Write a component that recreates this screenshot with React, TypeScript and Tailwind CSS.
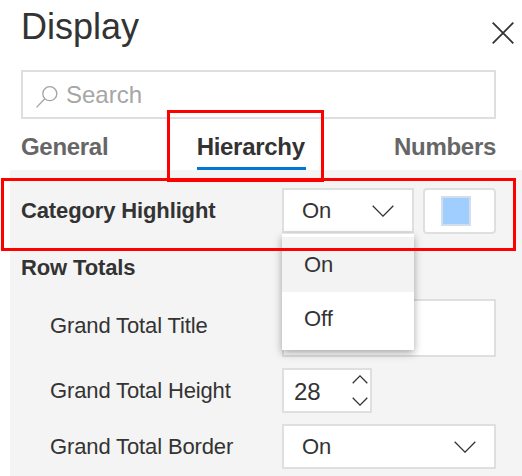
import type { ReactNode } from "react";

function Chevron({ w, h, up = false, className = "" }: { w: number; h: number; up?: boolean; className?: string }) {
  const d = up ? `M.7 ${h - 0.7}L${w / 2} .9L${w - 0.7} ${h - 0.7}` : `M.7 .7L${w / 2} ${h - 0.9}L${w - 0.7} .7`;
  return (
    <svg width={w} height={h} viewBox={`0 0 ${w} ${h}`} fill="none" stroke="#333" strokeWidth="1.3" className={className}>
      <path d={d} />
    </svg>
  );
}

function Row({ label, children, className }: { label: string; children?: ReactNode; className: string }) {
  return (
    <div className={`flex pr-[26px] ${className}`}>
      <div className="flex-1 pt-px tracking-[-0.13px] whitespace-nowrap">{label}</div>
      {children}
    </div>
  );
}

export default function App() {
  return (
    <div className="relative flex h-[476px] w-[522px] flex-col overflow-hidden bg-white font-['Liberation_Sans',Arial,sans-serif] text-[22px] leading-[44px] text-[#333]">
      <header className="flex h-[70px] shrink-0 justify-between pr-[8px] pl-[21px]">
        <h1 className="pt-[4px] text-[36px] leading-[45px]">Display</h1>
        <svg width="22" height="22" viewBox="0 0 22 22" stroke="#333" strokeWidth="1.8" className="mt-[22px]">
          <path d="M.7.7l20.6 20.6M21.3.7L.7 21.3" />
        </svg>
      </header>

      <div className="ml-[21px] flex h-[49px] w-[475px] shrink-0 items-start border-2 border-[#dfdfdf] text-[#a6a6a6]">
        <svg width="22" height="22" viewBox="0 0 22 22" fill="none" stroke="#a3a3a3" strokeWidth="1.3" className="mt-[14px] ml-[13px]">
          <circle cx="13.8" cy="7.7" r="7" />
          <path d="M8.8 12.8L.5 21.4" />
        </svg>
        <span className="ml-[8px] text-[24px] leading-[46px]">Search</span>
      </div>

      <nav className="flex h-[51px] shrink-0 items-start justify-between pr-[26px] pl-[21px] text-[24px] leading-[56px] font-bold tracking-[-0.3px] text-[#666]">
        <div>General</div>
        <div className="h-[51px] w-[109px] border-b-[3px] border-[#0078d4] text-[#333]">Hierarchy</div>
        <div>Numbers</div>
      </nav>

      <main className="ml-[10px] flex flex-1 flex-col bg-[#f4f4f4] pt-[18px]">
        <Row label="Category Highlight" className="h-[57px] pl-[11px] font-bold">
          <div className="relative h-[45px] w-[132px] border-2 border-[#dfdfdf] bg-white font-normal">
            <div className="flex h-full items-center justify-between pr-[18px] pl-[18px]">
              <span className="leading-[42px]">On</span>
              <Chevron w={22} h={12} />
            </div>
            <div className="absolute top-[44px] -left-[2px] z-10 h-[116px] w-[132px] bg-white pt-[3px] shadow-[0_3px_8px_rgba(0,0,0,0.35)]">
              <div className="h-[55px] bg-[#f3f3f3] pl-[22px] leading-[55px]">On</div>
              <div className="pl-[22px] leading-[53px]">Off</div>
            </div>
          </div>
          <div className="ml-[9px] h-[46px] w-[73px] rounded-[4px] border-2 border-[#dfdfdf] bg-white pt-[6px] pl-[16px]">
            <div className="size-[30px] border-2 border-[#d2deea] bg-[#a0cfff]" />
          </div>
        </Row>
        <Row label="Row Totals" className="h-[54px] pl-[11px] font-bold" />
        <Row label="Grand Total Title" className="h-[69px] pl-[40px] leading-[52px]">
          <div className="h-[58px] w-[214px] border-2 border-[#dfdfdf] bg-white" />
        </Row>
        <Row label="Grand Total Height" className="h-[56px] pl-[40px]">
          <div className="mr-[124px] flex h-[45px] w-[90px] justify-between border-2 border-[#dfdfdf] bg-white pr-[2px] pl-[10px]">
            <span className="text-[24px]">28</span>
            <div className="flex flex-col items-center gap-[13px] pt-[5px]">
              <Chevron w={16} h={9} up />
              <Chevron w={16} h={9} />
            </div>
          </div>
        </Row>
        <Row label="Grand Total Border" className="h-[45px] pl-[40px]">
          <div className="flex h-[45px] w-[214px] items-center justify-between border-2 border-[#dfdfdf] bg-white pr-[18px] pl-[18px]">
            <span className="leading-[42px]">On</span>
            <Chevron w={22} h={12} />
          </div>
        </Row>
      </main>

      <div className="absolute top-[110px] left-[167px] z-20 h-[72px] w-[157px] border-[3px] border-[#f00]" />
      <div className="absolute top-[178px] left-px z-20 h-[73px] w-[515px] border-[3px] border-[#f00]" />
    </div>
  );
}
